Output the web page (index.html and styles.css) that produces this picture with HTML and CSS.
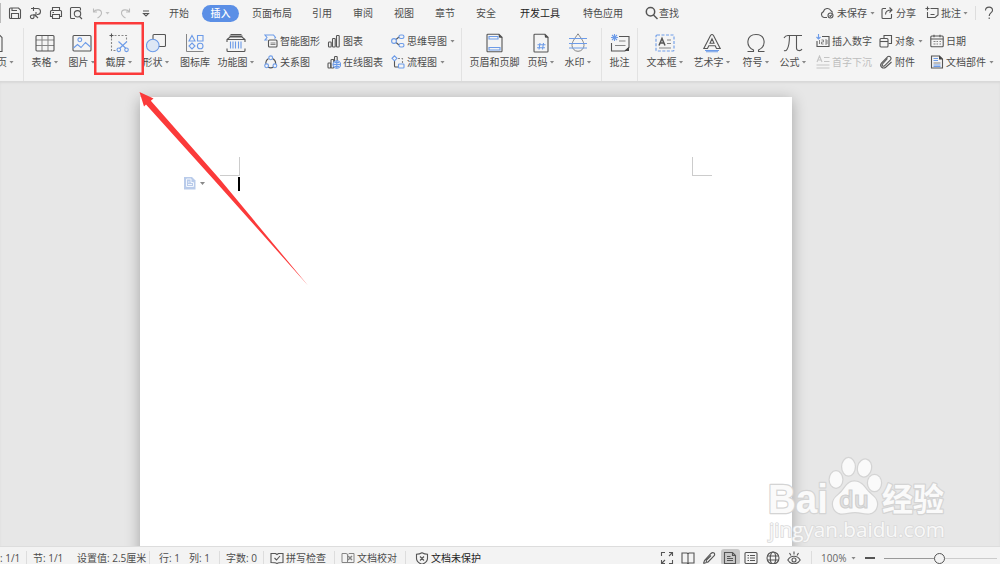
FILE: index.html
```html
<!DOCTYPE html>
<html lang="zh-CN">
<head>
    <meta charset="UTF-8">
    <meta name="viewport" content="width=device-width, initial-scale=1.0">
    <title>文档编辑</title>
    <link rel="stylesheet" href="styles.css">
</head>
<body>
    <div class="app">
        <header class="menu-bar">
            <div class="quick">
                <svg class="icon" width="14" height="14" viewBox="0 0 14 14"><path d="M1.500 3v8.500a1 1 0 0 0 1 1h9a1 1 0 0 0 1-1V4l-2-2h-8a1 1 0 0 0-1 1zM3.500 12.500v-5h7v5M4 2v2.500h5"/></svg>
                <svg class="icon" width="14" height="14" viewBox="0 0 14 14"><path d="M2 2.500h6.500a3 3 0 0 1 0 6H8M4.500 1v4M5 8v2.500a1.800 1.800 0 1 1-2-1.500h3l3 3M7 6v5"/></svg>
                <svg class="icon" width="14" height="14" viewBox="0 0 14 14"><path d="M3.500 4.500v-3h7v3M3.500 10.500h-2v-5a1 1 0 0 1 1-1h9a1 1 0 0 1 1 1v5h-2M3.500 8.500h7v4h-7zM3.500 6.500h1.500"/></svg>
                <svg class="icon" width="14" height="14" viewBox="0 0 14 14"><path d="M6 12.500H2.500a1 1 0 0 1-1-1v-9a1 1 0 0 1 1-1h8a1 1 0 0 1 1 1v2M10.500 10.500l2.500 2.500"/><circle cx="8.500" cy="7.800" r="3.200"/></svg>
                <svg class="icon pale" width="14" height="14" viewBox="0 0 14 14"><path d="M2.500 2.500v3.500h3.500M2.500 6c2-3 8-3 8 1 0 2-1.500 3.500-4 5"/></svg>
                <i class="caret pale"></i>
                <svg class="icon pale" width="14" height="14" viewBox="0 0 14 14"><path d="M11.500 2.500v3.500h-3.500M11.500 6c-2-3-8-3-8 1 0 2 1.500 3.500 4 5"/></svg>
                <svg class="icon" width="14" height="14" viewBox="0 0 14 14"><path d="M4 5h6M4.500 7.500h5l-2.500 2.500z"/></svg>
            </div>
            <nav class="tabs">
                <span>开始</span>
                <span class="active">插入</span>
                <span>页面布局</span>
                <span>引用</span>
                <span>审阅</span>
                <span>视图</span>
                <span>章节</span>
                <span>安全</span>
                <span class="dark">开发工具</span>
                <span>特色应用</span>
                <span class="search"><svg class="icon bold" width="14" height="14" viewBox="0 0 14 14"><circle cx="5.500" cy="5.800" r="4.200"/><path d="M8.500 9l4 4"/></svg>查找</span>
            </nav>
            <div class="account">
                <span><svg class="icon" width="14" height="14" viewBox="0 0 14 14"><path d="M7 11.500H4a3 3 0 0 1-.5-5.800 4 4 0 0 1 7.500-1 3 3 0 0 1 1.500 2"/><circle cx="10.500" cy="9.500" r="2.500"/><path d="M9.500 9.500l1 1 1.500-2"/></svg>未保存<i class="caret"></i></span>
                <span><svg class="icon" width="14" height="14" viewBox="0 0 14 14"><path d="M6 2.500H3a1 1 0 0 0-1 1v8a1 1 0 0 0 1 1h7.500a1 1 0 0 0 1-1V8M5.500 8.500c0-3 2-4.500 6-4.500M9.500 1.500l2.500 2.500-2.500 2.500"/></svg>分享</span>
                <span><svg class="icon" width="14" height="14" viewBox="0 0 14 14"><path d="M5.500 2.500h7.500v6.500l-3 2.500H2.500v-5.500M5.500 8.500h4M.5 2.500h4M2.500.5v4"/></svg>批注<i class="caret"></i></span>
                <svg class="icon help" width="12" height="14" viewBox="0 0 12 14"><path d="M2.500 4.500c0-4.500 7.500-4.500 7 0 0 2-3.300 2.500-3.300 5.500M6.200 11.500v1.500"/></svg>
            </div>
        </header>

        <section class="ribbon">
            <div class="tool first rule"><svg class="icon" width="20" height="20" viewBox="0 0 20 20"><path d="M2 1.500h12l3 3v14H2"/></svg><span>页<i class="caret"></i></span></div>
            <div class="tool"><svg class="icon" width="20" height="20" viewBox="0 0 20 20"><path class="thin" d="M1 7h18M1 12.500h18M7 3v15M13 3v15"/><rect x="1" y="2.500" width="18" height="15.500" rx="1"/></svg><span>表格<i class="caret"></i></span></div>
            <div class="tool"><svg class="icon" width="20" height="20" viewBox="0 0 20 20"><rect x="1" y="2.500" width="18" height="15.500" rx="1"/><g class="blue"><circle cx="7.800" cy="6.800" r="1.900"/><path d="M1.500 15l4-3.500 3.500 3 4.500-5 5 4.500"/></g></svg><span>图片<i class="caret"></i></span></div>
            <div class="tool"><svg class="icon" width="20" height="20" viewBox="0 0 20 20"><path d="M.5 2.500h4M2.500.5v4"/><path class="dash" d="M5.500 2.500h12v6M2.500 5.500v12h5"/><g class="blue"><path d="M9.500 8.500l7.500 7M18 8.500l-7.500 7"/><circle cx="9.800" cy="16.800" r="1.800"/><circle cx="17.500" cy="16.800" r="1.800"/></g></svg><span>截屏<i class="caret"></i></span></div>
            <div class="tool"><svg class="icon" width="20" height="20" viewBox="0 0 20 20"><rect x="7" y="1.500" width="12.500" height="12" rx="1"/><circle class="blue disc" cx="6.800" cy="12.500" r="6.300"/></svg><span>形状<i class="caret"></i></span></div>
            <div class="tool"><svg class="icon" width="20" height="20" viewBox="0 0 20 20"><path class="thin" d="M1.500 1v17.500h17"/><g class="blue"><path d="M7 2.500l3 5.500H4zM12.500 2.500h5.500V8h-5.500zM7 10l3 3-3 3-3-3z"/><circle cx="15.200" cy="13" r="2.800"/></g></svg><span>图标库</span></div>
            <div class="tool"><svg class="icon" width="20" height="20" viewBox="0 0 20 20"><path d="M4.500 1.500h11M1 9V6.500l3-2.500h12l3 2.500V9M1 6.500h18M1 15.500v2a1 1 0 0 0 1 1h16a1 1 0 0 0 1-1v-2M3.500 3h13"/><path class="blue" d="M4.500 8.500v7M7 8.500v7M9.500 8.500v7M12.500 8.500v7M15 8.500v7"/></svg><span>功能图<i class="caret"></i></span></div>

            <div class="stack smart">
                <div><svg class="icon" width="14" height="14" viewBox="0 0 14 14"><path class="blue" d="M3.500 6H1l2-2.500L1 1h8.500l2 2.500-1 1"/><rect x="4.500" y="6" width="8.500" height="7" rx="1"/><path class="thin" d="M6.500 9h5M6.500 10.500h5"/></svg>智能图形</div>
                <div><svg class="icon" width="14" height="14" viewBox="0 0 14 14"><path d="M4.500 3.500C2 5 1.500 7 2 9M8.500 3.500C11 5 12 7 11.500 9M4 12c1.500 1 4 1 5.500 0"/><g class="blue"><circle cx="6.700" cy="2.800" r="1.900"/><circle cx="2.600" cy="10.800" r="1.900"/><circle cx="10.900" cy="10.800" r="1.900"/></g></svg>关系图</div>
            </div>
            <div class="stack">
                <div><svg class="icon" width="14" height="14" viewBox="0 0 14 14"><rect x="1.500" y="8" width="2.700" height="5" rx=".7"/><rect x="5.500" y="4.500" width="2.700" height="8.500" rx=".7"/><rect x="9.500" y="1.500" width="2.700" height="11.500" rx=".7"/></svg>图表</div>
                <div><svg class="icon" width="14" height="14" viewBox="0 0 14 14"><rect x="1" y="8" width="2.700" height="5" rx=".7"/><rect x="4" y="4.500" width="2.700" height="8.500" rx=".7"/><rect x="7.500" y="1.500" width="2.700" height="6" rx=".7"/><g class="blue"><circle class="disc" cx="9.800" cy="9.500" r="3.800"/><path d="M6 9.500h7.600M9.800 5.700v7.600M7.500 7.500h4.600M7.500 11.500h4.600"/></g></svg>在线图表</div>
            </div>
            <div class="stack">
                <div><svg class="icon" width="14" height="14" viewBox="0 0 14 14"><path d="M5 5.500L8 3M5 8.500L8 11"/><g class="blue"><circle cx="3" cy="7" r="2.400"/><rect x="8" y="1" width="5" height="3.500" rx="1.700"/><rect x="8" y="9.500" width="5" height="3.500" rx="1.700"/></g></svg>思维导图<i class="caret"></i></div>
                <div><svg class="icon" width="14" height="14" viewBox="0 0 14 14"><path d="M3.500 6v5a1 1 0 0 0 1 1H7"/><path class="dash" d="M7 3.500h4.500V8"/><g class="blue"><path d="M3.500.8l2.500 2.500-2.500 2.500L1 3.300z"/><rect x="7.500" y="9" width="5.500" height="4" rx=".8"/></g></svg>流程图<i class="caret"></i></div>
            </div>

            <div class="tool rule-left"><svg class="icon" width="20" height="20" viewBox="0 0 20 20"><path d="M2 2a.8.800 0 0 1 .8-.8H14l3 3v13.800a.8.800 0 0 1-.8.800H2.800a.8.800 0 0 1-.8-.8z"/><path class="fill" d="M13.500 1l4 4-3.500-.5z"/><path class="blue" d="M4 3.500h9v2.500H4zM4 14.500h11v2.500H4z"/></svg><span>页眉和页脚</span></div>
            <div class="tool"><svg class="icon" width="20" height="20" viewBox="0 0 20 20"><path d="M3 2a.8.800 0 0 1 .8-.8H14l3 3v14a.8.800 0 0 1-.8.800H3.800a.8.800 0 0 1-.8-.8z"/><path class="fill" d="M13.500 1l4 4-3.500-.5z"/><path class="blue" d="M9 10l-1 6.500M12.500 10l-1 6.500M6.500 11.800h8M6 14.700h8"/></svg><span>页码<i class="caret"></i></span></div>
            <div class="tool"><svg class="icon" width="20" height="20" viewBox="0 0 20 20"><path class="thin" d="M10 .8c-3.500 5-6 8-6 11.500a6 6 0 0 0 12 0C16 8.800 13.500 5.800 10 .8z"/><path class="blue" d="M1 5.500h18M1 10.500h18M1 15h18"/></svg><span>水印<i class="caret"></i></span></div>
            <div class="tool rule-both"><svg class="icon" width="20" height="20" viewBox="0 0 20 20"><path d="M9 3.500h10v11l-4 3.500H1.500v-8"/><path class="thin" d="M9 8h6.500M5 12.500h10.500"/><path class="fill" d="M14.500 18l4.500-4v4z"/><path class="blue" d="M4.500 1v7M1 4.500h7M2 2l5 5M7 2L2 7"/></svg><span>批注</span></div>
            <div class="tool"><svg class="icon" width="20" height="20" viewBox="0 0 20 20"><rect class="blue dash-blue" x="1" y="2" width="18" height="16" rx="1"/><path class="bold" d="M4 12.500l3-7 3 7M5 10h4"/><path class="thin" d="M12 7h4M12 10.500h4M4 15h12"/></svg><span>文本框<i class="caret"></i></span></div>
            <div class="tool"><svg class="icon" width="20" height="20" viewBox="0 0 20 20"><path d="M1.800 15.500L8.500 2.500q1.500-2 3 0l6.700 13h-3.700l-1.300-2.700H6.800l-1.300 2.700zM8 10.300l2-4.500 2 4.500z"/><path class="blue" d="M3 17.500h14M4 18.800h12"/></svg><span>艺术字<i class="caret"></i></span></div>
            <div class="tool"><svg class="icon" width="20" height="20" viewBox="0 0 20 20"><path d="M1.500 18.500h6v-1.500C-1 13 .5 1.500 10 1.500S21 13 12.500 17v1.500h6"/></svg><span>符号<i class="caret"></i></span></div>
            <div class="tool"><svg class="icon" width="20" height="20" viewBox="0 0 20 20"><path d="M1 5c1-2 1.500-2.500 4-2.500h14M6.500 2.500c0 7-.5 11-2.500 14-1 1.500-2 1.500-3 1M13.500 2.500V15c0 3 4 3.500 5.500 1"/></svg><span>公式<i class="caret"></i></span></div>

            <div class="stack numbers">
                <div><svg class="icon" width="14" height="14" viewBox="0 0 14 14"><path d="M6 2.500h7v10H1V7"/><path class="thin" d="M3.500 6v4M5.500 6h2v2h-2v2h2M9 6h2v4H9M9 8h2"/><path class="blue" d="M2.500 0v5M.5 3l2 2 2-2"/></svg>插入数字</div>
                <div class="disabled"><svg class="icon" width="14" height="14" viewBox="0 0 14 14"><path d="M1 7l2.500-6L6 7M2 5h3M8 2.500h5.500M8 6.500h5.500M.5 10h13M.5 13h13"/></svg>首字下沉</div>
            </div>
            <div class="stack">
                <div><svg class="icon" width="14" height="14" viewBox="0 0 14 14"><path d="M5 4.500v-3h7.500v8H9.500"/><rect x="1" y="4.500" width="8" height="8.500" rx="1"/><path d="M1 7.500h8"/></svg>对象<i class="caret"></i></div>
                <div><svg class="icon" width="14" height="14" viewBox="0 0 14 14"><path d="M8.500 3.500l-5 5.500c-1 1.500.5 3 2 1.800l6-6c1.500-2-.8-4.500-3-3l-6 6.200c-2.500 3.500 1.500 6.500 4.500 4L12.500 7"/></svg>附件</div>
            </div>
            <div class="stack">
                <div><svg class="icon" width="14" height="14" viewBox="0 0 14 14"><rect x=".8" y="2" width="12.400" height="10.800" rx="1"/><path d="M.8 5h12.400M4 .8v2.500M10 .8v2.500"/><path class="thin" d="M3.500 7.500h2M6.500 7.500h1.500M9.500 7.500h1.500M3.500 10h2M6.500 10h1.500M9.500 10h1.500"/></svg>日期</div>
                <div><svg class="icon" width="14" height="14" viewBox="0 0 14 14"><path d="M1.500 1h8l3 3v9h-11z"/><path class="fill" d="M9 .5l4 4H9z"/><path class="blue" d="M3.500 3.500H8M3.500 5.500H8M3.500 11.500h7M3.500 10h7"/><path class="thin" d="M3.500 8h7"/></svg>文档部件<i class="caret"></i></div>
            </div>
        </section>

        <main class="workspace">
            <div class="page">
                <div class="corner corner-left"></div>
                <div class="corner corner-right"></div>
                <div class="cursor"></div>
                <div class="paste-tag">
                    <svg width="12" height="13" viewBox="0 0 12 13"><path d="M0 0h8l3.500 3.500V12.500H0z" fill="#b9cbea"/><path d="M2.500 2v7.500h7V5.500H7V2zM4 5h1.500M4 7.500h4" fill="none" stroke="#f3f7fd"/></svg>
                    <i class="caret"></i>
                </div>
            </div>
        </main>

        <footer class="status-bar">
            <div class="counts">
                <span>: 1/1</span>
                <span class="rule">节: 1/1</span>
                <span>设置值: 2.5厘米</span>
                <span class="rule">行: 1</span>
                <span>列: 1</span>
                <span class="rule">字数: 0</span>
                <span class="rule"><svg class="icon" width="14" height="13" viewBox="0 0 14 13"><path d="M7 11.500c-1-1-3-1-6-1V1.500h4.500l1.500 1 1.500-1H13v9c-3 0-5 0-6 1zM4.500 6l2 2 3.500-4"/></svg>拼写检查</span>
                <span class="rule"><svg class="icon thin" width="14" height="13" viewBox="0 0 14 13"><path d="M5 10.500H1v-9h4l2 1 1-1h5v9H7zM6.500 2.500v8"/><path class="bold" d="M7 4l4 4M11 4L7 8"/></svg>文档校对</span>
                <span class="rule dark"><svg class="icon" width="14" height="13" viewBox="0 0 14 13"><path d="M7 .8c2 1.200 3.500 1.500 5.500 1.500v4c0 3-2.500 5-5.500 6-3-1-5.500-3-5.500-6v-4C3.500 2.300 5 2 7 .8zM5 4.500l4 4M9 4.500l-4 4"/></svg>文档未保护</span>
            </div>
            <div class="views">
                <span><svg class="icon" width="14" height="14" viewBox="0 0 14 14"><path d="M1.500 5V1.500H5M9 1.500h3.500V5M12.500 9v3.500H9M5 12.500H1.500V9M9 5l3-3M5 9l-3 3"/></svg></span>
                <span><svg class="icon" width="14" height="14" viewBox="0 0 14 14"><path d="M1 2h5l1 .8L8 2h5v10H8l-1 .8-1-.8H1zM7 3v9"/></svg></span>
                <span><svg class="icon" width="14" height="14" viewBox="0 0 14 14"><path d="M1.500 12.500l1-3L9 2.500c2-2 5 0 3 2.500L6 11c-1 1-2.500-1-1.500-2L9 4.500M1.500 12.500l3-1"/></svg></span>
                <span class="selected"><svg class="icon" width="14" height="14" viewBox="0 0 14 14"><path d="M1.500 1.500H9.500l3 3v8h-11zM9.500 1.500v3h3M4 5.500h3.500M4 7.500h6M4 9.500h6"/></svg></span>
                <span><svg class="icon" width="14" height="14" viewBox="0 0 14 14"><rect x="1" y="1.500" width="12" height="11" rx="1"/><path d="M3.500 4.500H5M6 4.500h5M3.500 7H5M6 7h5M3.500 9.500H5M6 9.500h5"/></svg></span>
                <span><svg class="icon" width="14" height="14" viewBox="0 0 14 14"><circle cx="7" cy="7" r="6"/><ellipse cx="7" cy="7" rx="2.700" ry="6"/><path d="M1.500 5h11M1.500 9h11"/></svg></span>
                <span><svg class="icon" width="14" height="14" viewBox="0 0 14 14"><path d="M.8 9c3-5 9.400-5 12.400 0-3 5-9.400 5-12.400 0zM7 .5v3M2.500 2l1.500 2.500M11.500 2L10 4.500"/><circle cx="7" cy="9" r="2"/></svg></span>
            </div>
            <div class="zoom">
                <span>100%</span>
                <i class="caret"></i>
                <i class="minus"></i>
                <div class="slider"><i class="knob"></i></div>
            </div>
        </footer>

        <div class="highlight"></div>
        <svg class="arrow" width="170" height="196" viewBox="0 0 170 196"><path d="M.5 1l14 6.500-2.700 2.300L81.500 89l87.500 105.500L75.500 89.500 7 13.500 5 15.500z"/></svg>
        <svg class="watermark" width="190" height="95" viewBox="0 0 190 95">
            <g class="mark">
                <text x="8" y="62.500" font-size="41" textLength="60" lengthAdjust="spacingAndGlyphs" class="latin">Bai</text>
                <ellipse cx="76" cy="29.500" rx="6.300" ry="8.300"/>
                <ellipse cx="88.500" cy="16.800" rx="6.300" ry="8.700"/>
                <ellipse cx="104.500" cy="18" rx="6.500" ry="8.500" transform="rotate(12 104.500 18)"/>
                <ellipse cx="114.500" cy="33" rx="6.500" ry="8"/>
                <path d="M94.500 31.500c-7 0-9 6-13 10.500-4 4-8.500 6-8.500 12 0 5.500 4 9.500 9 9.500 4 0 8-1.500 13-1.500s8 1.500 13 1.500c5 0 9-4 9-9.500 0-6-4.500-8-8.500-12-4-4.500-7-10.500-14-10.500z"/>
                <text x="122" y="60.500" font-size="32" textLength="62" lengthAdjust="spacingAndGlyphs" class="hanzi">经验</text>
            </g>
            <text x="9" y="87" font-size="20" textLength="176" lengthAdjust="spacingAndGlyphs" class="url">jingyan.baidu.com</text>
            <text x="79" y="58" font-size="23" textLength="30" lengthAdjust="spacingAndGlyphs" class="du">du</text>
        </svg>
    </div>
</body>
</html>
```
FILE: styles.css
```css
* {
    margin: 0;
    padding: 0;
    box-sizing: border-box;
}

body {
    width: 1000px;
    height: 564px;
    overflow: hidden;
    font-family: "Open Sans", "Noto Sans CJK SC", sans-serif;
    font-size: 10px;
    line-height: 14px;
    color: #4c4c4c;
    background: #f4f4f4;
}

.app {
    position: relative;
    display: flex;
    flex-direction: column;
    height: 564px;
    overflow: hidden;
    white-space: nowrap;
}

svg {
    display: block;
    flex: none;
}

.icon {
    fill: none;
    stroke: #555;
    stroke-width: 1.1;
}

.icon.bold,
.icon .bold {
    stroke-width: 1.5;
}

.icon.thin,
.icon .thin {
    stroke: #858585;
    stroke-width: 1;
}

.icon.pale {
    stroke: #bbb;
}

.icon .blue {
    stroke: #6c9be8;
}

.icon .disc {
    fill: #dde7f5;
}

.icon .fill {
    fill: #444;
    stroke: none;
}

.icon .dash {
    stroke: #888;
    stroke-dasharray: 2 1.5;
}

.icon .dash-blue {
    stroke-dasharray: 3 1.5;
}

.caret {
    display: inline-block;
    flex: none;
    width: 5px;
    height: 3px;
    background: #888;
    clip-path: polygon(0 0, 100% 0, 50% 100%);
}

.caret.pale {
    background: #c5c5c5;
}

/* menu */
.menu-bar {
    display: grid;
    grid-template-columns: 169px 651px 180px;
    align-items: center;
    height: 26px;
}

.quick {
    display: grid;
    grid-template-columns: 21px 20px 20px 22px 14px 13px 21px 14px;
    align-items: center;
    height: 20px;
    padding-left: 7px;
    border-left: 1px solid #bbb;
}

.tabs {
    display: grid;
    grid-template-columns: 33px 50px 60px 41px 41px 41px 41px 44px 63px 62px 50px;
    align-items: center;
}

.tabs .active {
    width: 37px;
    height: 17px;
    line-height: 17px;
    text-align: center;
    color: #fff;
    font-weight: 500;
    background: #5b8fe6;
    border-radius: 9px;
}

.dark {
    color: #222;
}

.search {
    display: flex;
    align-items: center;
}

.account {
    display: grid;
    grid-template-columns: 60px 45px 51px 24px;
    align-items: center;
}

.account span {
    display: flex;
    align-items: center;
    gap: 3px;
}

.account span:nth-of-type(2) {
    gap: 2px;
}

.help {
    margin-left: 7px;
}

.account span:nth-of-type(3) {
    gap: 2px;
    border-right: 1px solid #ddd;
}

/* ribbon */
.ribbon {
    display: grid;
    grid-template-columns: 24px 42px 32px 42px 32px 46px 46px 63px 64px 70px 66px 28px 46px 37px 54px 40px 48px 36px 63px 51px 70px;
    height: 55px;
    padding-top: 2px;
}

.tool {
    display: flex;
    flex-direction: column;
    align-items: center;
    gap: 2px;
    padding-top: 5px;
}

.tool span {
    display: flex;
    align-items: center;
    gap: 2px;
}

.stack .caret {
    margin-left: 1px;
}

.tool:nth-child(7),
.tool:nth-child(18) {
    padding-right: 10px;
}

.tool.first {
    align-items: flex-end;
    padding-right: 9px;
}

.tool.first .icon {
    align-self: flex-start;
    margin-left: -15px;
}

.rule {
    border-right: 1px solid #e2e2e2;
}

.rule-left {
    border-left: 1px solid #e2e2e2;
}

.rule-both {
    border-left: 1px solid #e2e2e2;
    border-right: 1px solid #e2e2e2;
}

.stack {
    display: flex;
    flex-direction: column;
    gap: 7px;
    padding-top: 6px;
}

.stack div {
    display: flex;
    align-items: center;
    gap: 2px;
}

.stack .disabled {
    color: #bdbdbd;
}

.disabled .icon {
    stroke: #c4c4c4;
}

/* document */
.workspace {
    display: flex;
    height: 465px;
    padding: 16px 0 0 140px;
    overflow: hidden;
    background: #e7e7e7;
    box-shadow: inset 0 2px 2px #d8d8d8;
}

.page {
    position: relative;
    width: 652px;
    height: 480px;
    background: #fff;
    box-shadow: 0 3px 14px rgba(0, 0, 0, 0.3);
}

.corner {
    position: absolute;
    top: 60px;
    width: 20px;
    height: 19px;
    border-bottom: 1px solid #ccc;
}

.corner-left {
    left: 80px;
    border-right: 1px solid #ccc;
}

.corner-right {
    left: 552px;
    border-left: 1px solid #ccc;
}

.cursor {
    position: absolute;
    top: 80px;
    left: 98px;
    width: 2px;
    height: 14px;
    background: #000;
}

.paste-tag {
    position: absolute;
    top: 80px;
    left: 44px;
    display: flex;
    align-items: center;
    gap: 4px;
}

/* status bar */
.status-bar {
    display: grid;
    grid-template-columns: 656px 156px 188px;
    height: 18px;
    padding-top: 4px;
    background: #f3f3f3;
    border-top: 1px solid #ddd;
}

.counts {
    display: grid;
    grid-template-columns: 26px 51px 72px 40px 30px 44px 71px 71px 100px;
}

.counts span {
    display: flex;
    align-items: center;
    gap: 2px;
    height: 14px;
}

.counts .rule {
    padding-left: 6px;
    border-right: 0;
    border-left: 1px solid #ddd;
}

.counts .rule:nth-child(4),
.counts .rule:nth-child(9) {
    padding-left: 9px;
}

.views {
    display: grid;
    grid-template-columns: repeat(7, 21.2px);
    border-right: 1px solid #ddd;
}

.views span {
    display: flex;
    justify-content: center;
    height: 14px;
}

.views .selected {
    width: 19px;
    height: 16px;
    margin: -2px 0 0 1px;
    padding-top: 2px;
    background: #c8c8c8;
    border-radius: 3px;
}

.zoom {
    display: grid;
    grid-template-columns: 30px 14px 19px 116px;
    align-items: center;
    height: 14px;
    padding-left: 9px;
    color: #666;
}

.minus {
    width: 10px;
    height: 2px;
    background: #555;
}

.slider {
    display: flex;
    align-items: center;
    height: 11px;
    padding-left: 50px;
    background: linear-gradient(#999, #999) 0 5px / 52px 1px no-repeat, linear-gradient(#ccc, #ccc) 52px 5px / 61px 1px no-repeat;
}

.knob {
    width: 11px;
    height: 11px;
    background: #f3f3f3;
    border: 1px solid #555;
    border-radius: 50%;
}

/* marks drawn over the window */
.highlight {
    position: absolute;
    top: 22px;
    left: 94px;
    width: 50px;
    height: 53px;
    border: 2px solid #fb3a3a;
    box-shadow: inset 0 0 0 0.5px #fb3a3a;
}

.arrow {
    position: absolute;
    top: 91px;
    left: 139px;
    fill: #fb3a3a;
}

.watermark {
    position: absolute;
    top: 450px;
    left: 760px;
}

.mark {
    fill: #fafafa;
    stroke: #d4d4d4;
    stroke-width: 2.5;
    stroke-linejoin: round;
    paint-order: stroke;
}

.latin {
    font-family: "Liberation Sans", sans-serif;
    font-weight: 700;
}

.hanzi {
    font-family: "Noto Sans CJK SC", sans-serif;
    font-weight: 700;
}

.url {
    font-family: "Open Sans", sans-serif;
    fill: #f8f8f8;
    stroke: #dadada;
    stroke-width: 1.6;
    paint-order: stroke;
}

.du {
    font-family: "Open Sans", sans-serif;
    font-weight: 600;
    fill: #e2e2e2;
    stroke: #cfcfcf;
    stroke-width: 1;
}
```
